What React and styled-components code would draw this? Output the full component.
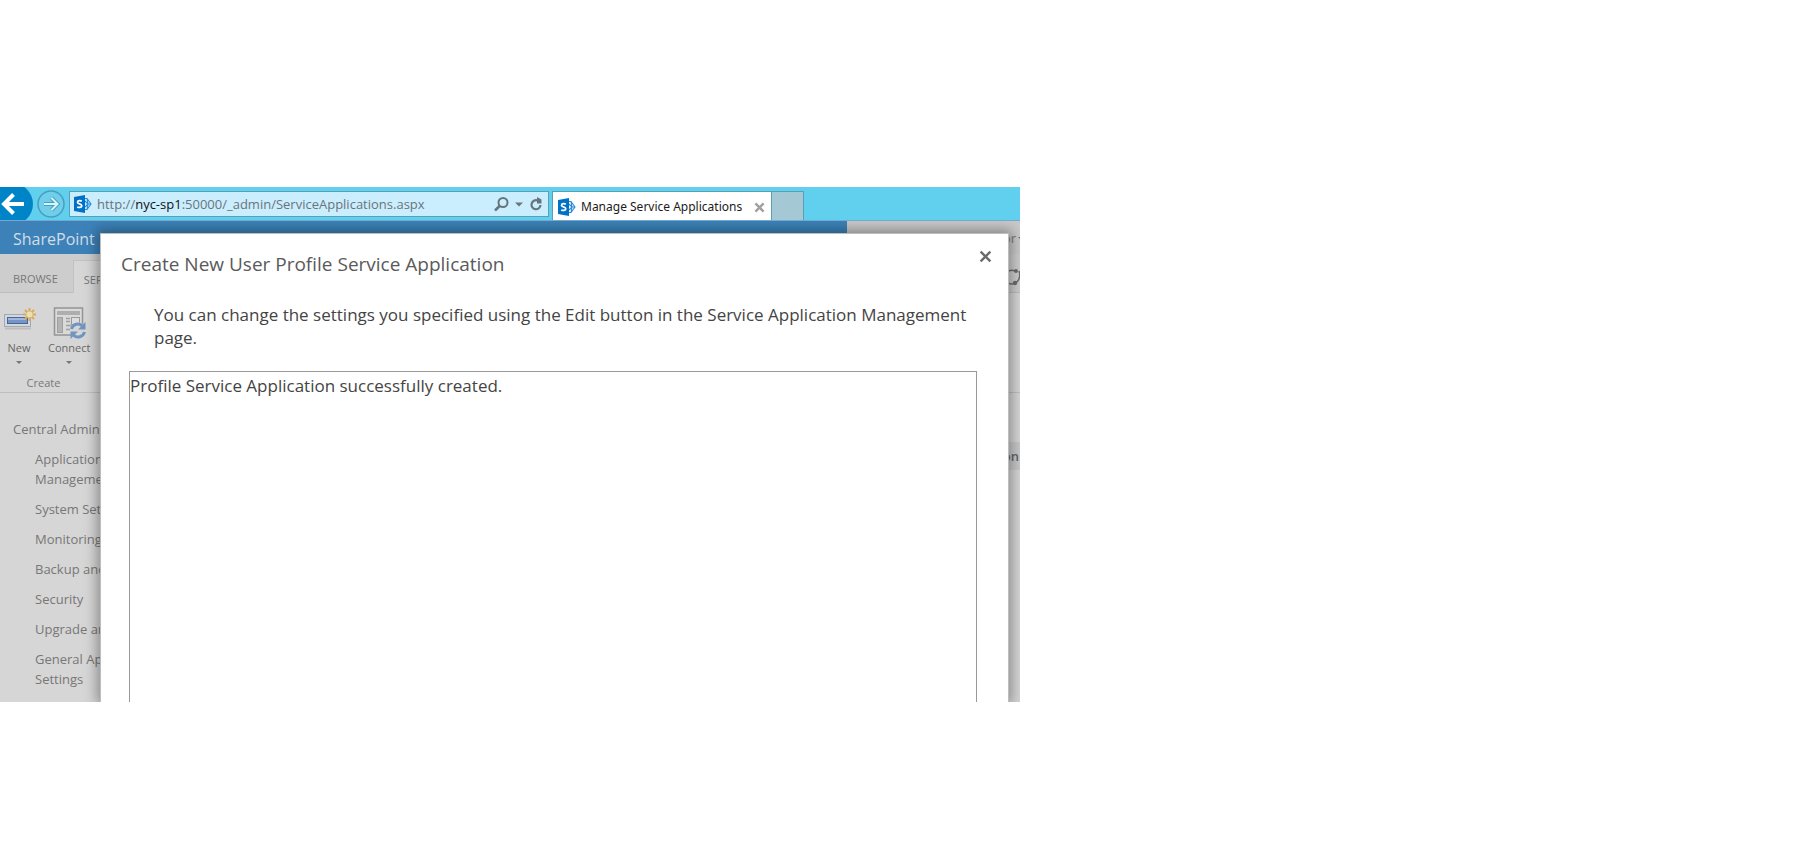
import React from "react";
import styled, { createGlobalStyle, css } from "styled-components";

const ui = '"Open Sans", "Noto Sans", sans-serif';
const tabFont = '"Noto Sans", "Open Sans", sans-serif';

const Global = createGlobalStyle`
  *, *::before, *::after { box-sizing: border-box; }
  body { margin: 0; background: #fff; font-family: ${ui}; }
  button { font: inherit; color: inherit; background: none; border: 0; padding: 0; cursor: pointer; }
  a { color: inherit; text-decoration: none; }
  svg { display: block; flex: none; }
`;

const Canvas = styled.div`
  padding-top: 187px;
`;

const Browser = styled.div`
  width: 100%;
  max-width: 1020px;
  overflow: hidden;
`;

const Chrome = styled.header`
  display: flex;
  height: 34px;
  background: #61cfee;
  border-bottom: 1px solid #74a9cf;
  font-size: 13px;
  line-height: 20px;
  overflow: hidden;
`;

const BackButton = styled.button`
  flex: none;
  width: 33px;
  height: 33px;
`;

const ForwardButton = styled.button`
  flex: none;
  width: 28px;
  margin: 0 4px;
`;

const AddressBar = styled.div`
  display: flex;
  align-items: center;
  flex: 0 1 480px;
  min-width: 0;
  height: 26px;
  margin-top: 4px;
  padding: 0 5px 0 4px;
  background: #cbeeff;
  border: 1px solid #5a9fb4;
  color: #6a7479;
`;

const Url = styled.div`
  flex: 1;
  min-width: 0;
  margin-left: 5px;
  white-space: nowrap;
  overflow: hidden;

  b {
    font-weight: 400;
    color: #111;
  }
`;

const AddressTools = styled.div`
  display: flex;
  align-items: center;
  gap: 6px;
`;

const Tab = styled.div`
  display: flex;
  align-items: center;
  flex: 0 1 220px;
  min-width: 0;
  margin: 4px 0 0 3px;
  padding: 2px 6px 0 5px;
  background: #fff;
  border: 1px solid #5a9fb4;
  border-bottom: 0;
  color: #1b1b1b;
`;

const TabTitle = styled.span`
  flex: 1;
  margin-left: 5px;
  font-family: ${tabFont};
  font-size: 12px;
  white-space: nowrap;
`;

const NewTab = styled.button`
  width: 32px;
  margin-top: 4px;
  && {
    background: #a4c9d5;
    border: 1px solid #5a9fb4;
    border-width: 1px 1px 0 0;
  }
`;

const Page = styled.div`
  position: relative;
  overflow: hidden;
  background: #d6d6d6;
  color: #777;
`;

const SuiteBar = styled.div`
  display: flex;
  height: 33px;
  background: #c9c9c9;
  font-size: 13px;
`;

const Brand = styled.a`
  flex: 0 0 83%;
  padding-left: 13px;
  background: #3c82b9;
  color: #d3dde5;
  font-size: 16px;
  line-height: 36px;
`;

const Account = styled.button`
  && {
    flex: 1;
    display: flex;
    justify-content: flex-end;
    align-items: center;
    gap: 2px;
  }
`;

const TabRow = styled.div`
  display: flex;
  align-items: flex-end;
  height: 39px;
  background: #cdcdcd;
  border-bottom: 1px solid #bdbdbd;
`;

const RibbonTab = styled.button`
  && {
    height: 32px;
    padding: 4px 12px 0 13px;
    font-size: 11px;
    white-space: nowrap;
    color: #777;
    ${(p) =>
      p.$active &&
      css`
        height: 33px;
        margin: 0 0 -1px 3px;
        padding-left: 10px;
        background: #d6d6d6;
        border: 1px solid #c2c2c2;
        border-bottom: 0;
      `}
  }
`;

const TabRowEnd = styled.span`
  margin-left: auto;
  padding-bottom: 5px;
`;

const Ribbon = styled.section`
  display: flex;
  flex-direction: column;
  align-items: flex-start;
  height: 100px;
  padding-top: 13px;
  border-bottom: 1px solid #bfbfbf;
  font-size: 11px;
  color: #666;
`;

const RibbonButtons = styled.div`
  display: flex;
  gap: 12px;
  padding-left: 2px;
`;

const RibbonButton = styled.button`
  && {
    display: flex;
    flex-direction: column;
    align-items: center;
    min-width: 34px;
    line-height: 16px;
  }
`;

const ButtonLabel = styled.span`
  margin-bottom: 4px;
`;

const GroupLabel = styled.div`
  width: 87px;
  margin-top: auto;
  text-align: center;
  line-height: 18px;
  color: #777;
`;

const Body = styled.div`
  display: flex;
  justify-content: space-between;
  padding-bottom: 13px;
  font-size: 13px;
  line-height: 20px;
`;

const SideNav = styled.nav`
  width: 180px;
  padding: 26px 0 0 13px;

  ul {
    list-style: none;
    margin: 10px 0 0;
    padding: 0 0 0 22px;
    display: grid;
    gap: 10px;
    white-space: pre;
  }
`;

const ListHeader = styled.div`
  width: 200px;
  height: 28px;
  margin-top: 49px;
  padding-right: 1px;
  background: #c9c9c9;
  text-align: right;
  font-weight: 600;
  line-height: 28px;
  color: #666;
`;

const Dialog = styled.section`
  position: absolute;
  inset: 12px 11px 0 100px;
  padding: 14px 31px 0 28px;
  background: #fff;
  border: 1px solid #bdbdbd;
  border-bottom: 0;
  box-shadow: 0 0 12px 3px rgba(0, 0, 0, 0.35);
  color: #444;
  display: flex;
  flex-direction: column;
`;

const DialogHead = styled.div`
  display: flex;
  align-items: flex-start;
  justify-content: space-between;
  margin: 0 -16px 0 -8px;
`;

const DialogTitle = styled.h1`
  margin: 0;
  font-size: 19px;
  font-weight: 400;
  line-height: 32px;
  color: #5a5a5a;
`;

const CloseButton = styled.button`
  width: 14px;
  height: 14px;
  margin-top: 1px;
`;

const Hint = styled.p`
  margin: 23px 0 0 25px;
  font-size: 17px;
  line-height: 23px;
`;

const Result = styled.div`
  flex: 1;
  margin-top: 22px;
  border: 1px solid #999;
  border-bottom: 0;
  font-size: 17px;
  line-height: 28px;
`;

const SharePointMark = () => (
  <svg width="18" height="18" viewBox="0 0 18 18" aria-hidden="true">
    <path d="M11 3.500h2L17 9l-4 5.500h-2M11 6l3 3-3 3M13 3.500 14 9l-1 5.500M14 9h3" fill="none" stroke="#2b8ad6" strokeWidth="1.100" />
    <path d="M0 2 11 0v18L0 16z" fill="#0072c6" />
    <path d="M7.800 6.200C6.600 5.400 3.500 5.300 3.500 7.200c0 2 4.300 1.400 4.300 3.600 0 2-3.200 1.900-4.600 1.100" fill="none" stroke="#fff" strokeWidth="1.700" />
  </svg>
);

const Caret = ({ width = 8, color = "#6d7475" }) => (
  <svg width={width} height="5" viewBox="0 0 8 5" aria-hidden="true">
    <path d="M0 0.500h8L4 4.500z" fill={color} />
  </svg>
);

const Cross = ({ size, color, width }) => (
  <svg width={size} height={size} viewBox="0 0 12 12" aria-hidden="true">
    <path d="M1.500 1.500l9 9M10.500 1.500l-9 9" stroke={color} strokeWidth={width} />
  </svg>
);

const NewIcon = () => (
  <svg width="34" height="34" viewBox="0 0 34 34" aria-hidden="true">
    <rect x="2.500" y="8.500" width="26" height="12" fill="#d3d8de" stroke="#a4a9b0" />
    <rect x="5.500" y="11.500" width="20" height="6" fill="#7596c4" stroke="#4a659a" />
    <path d="M6 12h18v2H6z" fill="#9fb8dc" />
    <path d="M3 22.500h26" stroke="#bcbcbc" strokeWidth="2" />
    <path d="M27.500 2v13M21 8.500h13M23 4l9 9M32 4l-9 9" stroke="#d9ab58" strokeWidth="2" />
    <circle cx="27.500" cy="8.500" r="3" fill="#eddfb4" />
  </svg>
);

const ConnectIcon = () => (
  <svg width="34" height="34" viewBox="0 0 34 34" aria-hidden="true">
    <g transform="translate(1 0)">
      <rect x="1.500" y="2" width="28" height="27" fill="#dadada" stroke="#949494" strokeWidth="1.500" />
      <path d="M4 6h23M4 8h23" stroke="#a0a0a0" strokeWidth="1.500" />
      <rect x="4.500" y="11.500" width="5" height="15" fill="#b4b4b4" stroke="#a0a0a0" />
      <path d="M13 12.500h4M13 15.500h4M13 19.500h5M13 23.500h4" stroke="#a0a0a0" strokeWidth="1.500" />
      <rect x="18.500" y="11.500" width="8" height="7" fill="#ddd" stroke="#999" />
    </g>
    <circle cx="26" cy="24.500" r="8" fill="#d6d6d6" />
    <path d="M19.500 23a6.500 6.500 0 0 1 11-3" fill="none" stroke="#6f95c0" strokeWidth="3" />
    <path d="M33.500 16v7.500H26z" fill="#6f95c0" />
    <path d="M32.500 26a6.500 6.500 0 0 1-11 3" fill="none" stroke="#6f95c0" strokeWidth="3" />
    <path d="M18.500 33v-7.500H26z" fill="#6f95c0" />
  </svg>
);

const NAV = [
  "Application\nManagement",
  "System Settings",
  "Monitoring",
  "Backup and Restore",
  "Security",
  "Upgrade and Migration",
  "General Application\nSettings",
];

export default function App() {
  return (
    <Canvas>
      <Global />
      <Browser>
        <Chrome>
          <BackButton aria-label="Back">
            <svg width="33" height="33" viewBox="0 0 33 33">
              <circle cx="12" cy="17" r="21" fill="#0084c8" />
              <path d="M24 17H4M13.500 7.500 4 17l9.500 9.500" fill="none" stroke="#fff" strokeWidth="4" />
            </svg>
          </BackButton>
          <ForwardButton aria-label="Forward">
            <svg width="28" height="33" viewBox="0 0 28 33">
              <circle cx="14" cy="17" r="13" fill="#6fcfea" stroke="#4a9fbd" strokeWidth="1.500" />
              <path d="M7 17h13M14.500 11l6 6-6 6" fill="none" stroke="#4a9fbd" strokeWidth="4" />
              <path d="M7 17h13M14.500 11l6 6-6 6" fill="none" stroke="#d8f4fc" strokeWidth="2" />
            </svg>
          </ForwardButton>
          <AddressBar>
            <SharePointMark />
            <Url role="textbox" aria-label="Address">
              http://<b>nyc-sp1</b>:50000/_admin/ServiceApplications.aspx
            </Url>
            <AddressTools>
              <button aria-label="Search">
                <svg width="15" height="15" viewBox="0 0 15 15">
                  <circle cx="9" cy="5.500" r="4.500" fill="none" stroke="#66757b" strokeWidth="2" />
                  <path d="M5.800 8.800 1 13.500" stroke="#66757b" strokeWidth="2.600" />
                </svg>
              </button>
              <button aria-label="Show address list"><Caret /></button>
              <button aria-label="Refresh">
                <svg width="14" height="14" viewBox="0 0 14 14">
                  <path d="M8.500 3.500A4.500 4.500 0 1 0 11.500 8" fill="none" stroke="#66757b" strokeWidth="2.200" />
                  <path d="M8 0v6.500h4.500V2.500z" fill="#66757b" />
                </svg>
              </button>
            </AddressTools>
          </AddressBar>
          <Tab>
            <SharePointMark />
            <TabTitle>Manage Service Applications</TabTitle>
            <button aria-label="Close tab"><Cross size={11} color="#a0a0a0" width={2.6} /></button>
          </Tab>
          <NewTab aria-label="New tab" />
        </Chrome>

        <Page>
          <SuiteBar>
            <Brand href="#">SharePoint</Brand>
            <Account>
              Administrator
              <svg width="2" height="6" viewBox="0 0 2 6" aria-hidden="true">
                <path d="M0 2h2v2z" fill="#777" />
              </svg>
            </Account>
          </SuiteBar>
          <TabRow>
            <RibbonTab>BROWSE</RibbonTab>
            <RibbonTab $active>SERVICE APPLICATIONS</RibbonTab>
            <TabRowEnd>
              <svg width="17" height="20" viewBox="0 0 17 20" aria-hidden="true">
                <path d="M4 5a8 8 0 0 1 8-1M16 4a11 11 0 0 1-3 12M10 17a8 8 0 0 1-7-3" fill="none" stroke="#6d6d6d" strokeWidth="1.500" />
                <circle cx="13" cy="4" r="2" fill="#6d6d6d" />
                <circle cx="12" cy="16" r="2.200" fill="#6d6d6d" />
              </svg>
            </TabRowEnd>
          </TabRow>
          <Ribbon>
            <RibbonButtons>
              <RibbonButton>
                <NewIcon />
                <ButtonLabel>New</ButtonLabel>
                <Caret width={6} color="#777" />
              </RibbonButton>
              <RibbonButton>
                <ConnectIcon />
                <ButtonLabel>Connect</ButtonLabel>
                <Caret width={6} color="#777" />
              </RibbonButton>
            </RibbonButtons>
            <GroupLabel>Create</GroupLabel>
          </Ribbon>
          <Body>
            <SideNav>
              <a href="#">Central Administration</a>
              <ul>
                {NAV.map((label) => (
                  <li key={label}><a href="#">{label}</a></li>
                ))}
              </ul>
            </SideNav>
            <ListHeader>Description</ListHeader>
          </Body>

          <Dialog role="dialog" aria-labelledby="dialog-title">
            <DialogHead>
              <DialogTitle id="dialog-title">Create New User Profile Service Application</DialogTitle>
              <CloseButton aria-label="Close"><Cross size={13} color="#6a6a6a" width={2.2} /></CloseButton>
            </DialogHead>
            <Hint>
              You can change the settings you specified using the Edit button in the Service Application
              Management page.
            </Hint>
            <Result>Profile Service Application successfully created.</Result>
          </Dialog>
        </Page>
      </Browser>
    </Canvas>
  );
}
